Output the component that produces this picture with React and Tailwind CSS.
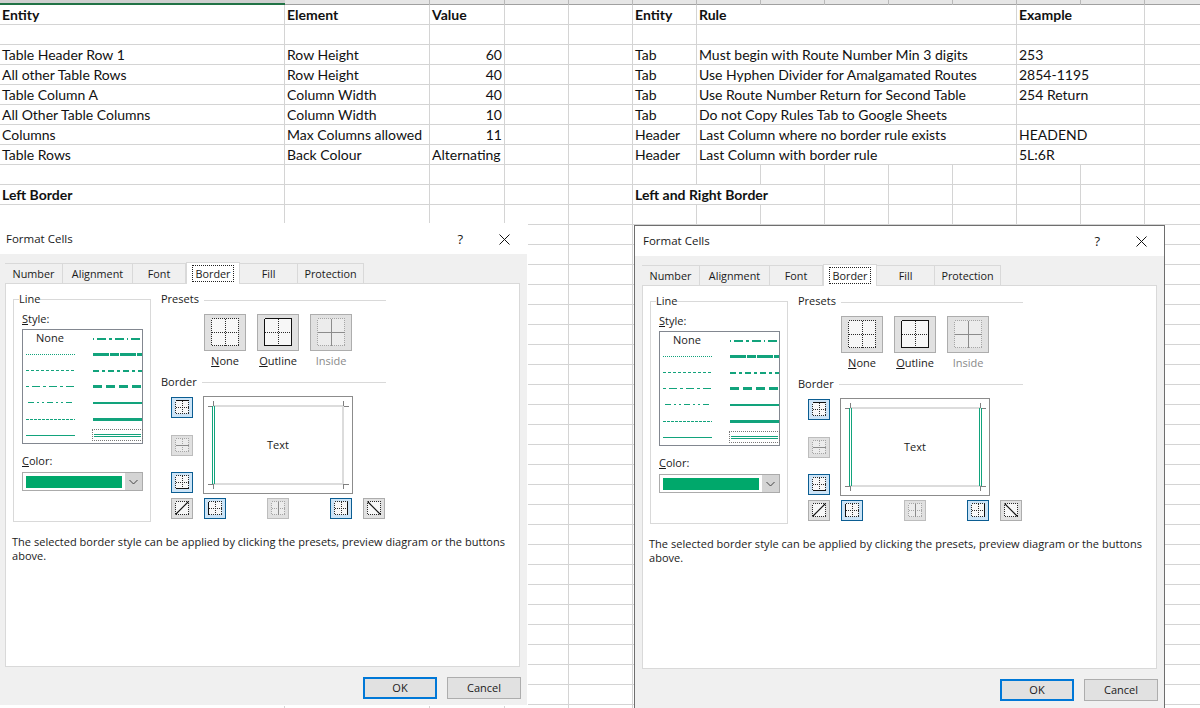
import React from 'react';

const GREEN = '#12a37c';

const leftRows = [
  ['Entity', 'Element', 'Value', 'Entity', 'Rule', 'Example'],
  ['', '', '', '', '', ''],
  ['Table Header Row 1', 'Row Height', '60', 'Tab', 'Must begin with Route Number Min 3 digits', '253'],
  ['All other Table Rows', 'Row Height', '40', 'Tab', 'Use Hyphen Divider for Amalgamated Routes', '2854-1195'],
  ['Table Column A', 'Column Width', '40', 'Tab', 'Use Route Number Return for Second Table', '254 Return'],
  ['All Other Table Columns', 'Column Width', '10', 'Tab', 'Do not Copy Rules Tab to Google Sheets', ''],
  ['Columns', 'Max Columns allowed', '11', 'Header', 'Last Column where no border rule exists', 'HEADEND'],
  ['Table Rows', 'Back Colour', 'Alternating', 'Header', 'Last Column with border rule', '5L:6R'],
];

const cell = 'h-5 border-r border-b border-[#d4d4d4] px-[2px] text-[14px] leading-[20px] whitespace-nowrap overflow-hidden';

const Sheet = () => (
  <div className="w-[1200px] font-['Lato',sans-serif] text-[#111]">
    <div className="grid grid-cols-[285px_145px_75px_64px_64px_64px_64px_64px_64px_64px_64px_64px_64px_64px_55px] h-[5px] bg-[#e6e6e6] border-b border-[#a0a0a0]">
      <div className="h-[5px] bg-[#cfcfcf] border-b-2 border-[#217346]"></div>
      {Array.from({ length: 14 }).map((_, i) => (
        <div key={i} className="border-r border-[#b8b8b8]"></div>
      ))}
    </div>
    <div className="grid grid-cols-[285px_145px_75px_64px_64px_64px_64px_64px_64px_64px_64px_64px_64px_64px_55px]">
      {leftRows.map((r, i) => (
        <React.Fragment key={i}>
          <div className={`${cell} ${i === 0 ? 'font-bold' : ''}`}>{r[0]}</div>
          <div className={`${cell} ${i === 0 ? 'font-bold' : ''}`}>{r[1]}</div>
          <div className={`${cell} ${i === 0 ? 'font-bold' : r[2] === 'Alternating' ? '' : 'text-right'}`}>{r[2]}</div>
          <div className={cell}></div>
          <div className={cell}></div>
          <div className={`${cell} ${i === 0 ? 'font-bold' : ''}`}>{r[3]}</div>
          <div className={`${cell} col-span-5 ${i === 0 ? 'font-bold' : ''}`}>{r[4]}</div>
          <div className={`${cell} col-span-2 ${i === 0 ? 'font-bold' : ''}`}>{r[5]}</div>
          <div className={cell}></div>
          <div className="h-5 border-b border-[#d4d4d4]"></div>
        </React.Fragment>
      ))}
      {Array.from({ length: 28 }).map((_, i) => {
        // "Left and Right Border" runs over into the next cells, as in a sheet
        const wide = i === 1;
        const cols = wide ? 13 : 15;
        return (
          <React.Fragment key={i}>
            {Array.from({ length: cols }).map((_, c) => {
              let text = '';
              if (wide && c === 0) text = 'Left Border';
              if (wide && c === 5) text = 'Left and Right Border';
              const last = c === cols - 1;
              return (
                <div
                  key={c}
                  className={`${last ? 'h-5 border-b border-[#d4d4d4]' : cell} ${text ? 'font-bold' : ''} ${wide && c === 5 ? 'col-span-3' : ''}`}
                >
                  {text}
                </div>
              );
            })}
          </React.Fragment>
        );
      })}
    </div>
  </div>
);

// dotted frame with a cross, plus the solid strokes the button stands for
const FrameIcon = ({ w, h, x0, y0, x1, y1, solid = [], grey = false }) => {
  const mx = Math.floor((x0 + x1) / 2) + 0.5;
  const my = Math.floor((y0 + y1) / 2) + 0.5;
  const ink = grey ? '#8c8c8c' : '#111';
  const dots = grey ? '#a6a6a6' : '#2a2a2a';
  const lines = {
    top: [x0, y0, x1, y0],
    bottom: [x0, y1, x1, y1],
    left: [x0, y0, x0, y1],
    right: [x1, y0, x1, y1],
    middle: [x0, my, x1, my],
    center: [mx, y0, mx, y1],
    up: [x0, y1, x1, y0],
    down: [x0, y0, x1, y1],
  };
  const diagonal = solid.includes('up') || solid.includes('down');
  return (
    <svg width={w} height={h} className="block">
      <rect x={x0} y={y0} width={x1 - x0} height={y1 - y0} fill={grey ? '#ececec' : '#f7f7f7'} />
      <g stroke={dots} strokeDasharray="1 1" fill="none" shapeRendering="crispEdges">
        <rect x={x0} y={y0} width={x1 - x0} height={y1 - y0} />
        {!diagonal && <line x1={mx} y1={y0} x2={mx} y2={y1} />}
        {!diagonal && <line x1={x0} y1={my} x2={x1} y2={my} />}
      </g>
      {solid.map(s => {
        const l = lines[s];
        const diag = s === 'up' || s === 'down';
        return (
          <line
            key={s}
            x1={l[0]}
            y1={l[1]}
            x2={l[2]}
            y2={l[3]}
            stroke={ink}
            strokeWidth={diag ? 1.1 : 1}
            shapeRendering={diag ? 'auto' : 'crispEdges'}
          />
        );
      })}
    </svg>
  );
};

const SideButton = ({ solid, state = 'off' }) => {
  const tone =
    state === 'on'
      ? 'border-[#0b5d92] bg-[#cce4f7]'
      : state === 'disabled'
      ? 'border-[#bdbdbd] bg-[#e0e0e0]'
      : 'border-[#adadad] bg-[#e1e1e1]';
  return (
    <div className={`box-border w-[22px] h-[21px] border ${tone}`}>
      <FrameIcon w={20} h={19} x0={3.5} y0={2.5} x1={16.5} y1={15.5} solid={[solid]} grey={state === 'disabled'} />
    </div>
  );
};

const PresetButton = ({ solid = [], grey }) => (
  <div className="box-border w-[42px] h-[37px] border border-[#adadad] bg-[#e1e1e1]">
    <FrameIcon w={40} h={35} x0={6.5} y0={3.5} x1={33.5} y1={30.5} solid={solid} grey={grey} />
  </div>
);

const LineSample = ({ dash, width = 1, x = 0 }) => (
  <svg width="50" height="5" className="block">
    <line
      x1={x}
      y1="2.5"
      x2="49"
      y2="2.5"
      stroke={GREEN}
      strokeWidth={width}
      strokeDasharray={dash}
      shapeRendering="crispEdges"
    />
  </svg>
);

const lineStyles = [
  [null, { dash: '1 3 9 3 3 3 9 3', width: 2 }],
  [{ dash: '1 1' }, { dash: '16 1 9 1', width: 3 }],
  [{ dash: '3 2' }, { dash: '6 3 3 3', width: 2 }],
  [{ dash: '3 3 8 3' }, { dash: '9 4', width: 3 }],
  [{ dash: '6 3 2 3 2 3', x: 2 }, { width: 2 }],
  [{ dash: '3 1' }, { width: 3 }],
  [{}, null],
];

const LineList = () => (
  <div className="box-border w-[121px] h-[115px] border border-[#828790] bg-white">
    {lineStyles.map((row, i) => (
      <div key={i} className="grid grid-cols-[67px_1fr] h-[16.2px] items-center pl-[3px]">
        {row[0] ? <LineSample {...row[0]} /> : <span className="pl-[10px]">None</span>}
        {row[1] ? (
          <LineSample {...row[1]} />
        ) : (
          <div className="box-border w-[51px] h-[12px] -ml-[1px] border border-dotted border-[#777] flex flex-col justify-center gap-[1px] px-[1px]">
            <div className="h-px bg-[#12a37c]"></div>
            <div className="h-px bg-[#12a37c]"></div>
          </div>
        )}
      </div>
    ))}
  </div>
);

const GroupHeading = ({ children, lift = '-mt-[2px]' }) => (
  <div className="flex items-center gap-[5px] h-[14px] w-[225px]">
    <span className={`leading-[12px] ${lift}`}>{children}</span>
    <div className="flex-1 h-px bg-[#d9d9d9]"></div>
  </div>
);

const Preview = ({ both }) => (
  <div className="relative box-border w-[150px] h-[98px] border border-[#8c8c8c] bg-white flex items-center justify-center">
    <svg width="148" height="96" className="absolute left-0 top-0">
      <g fill="#dcdcdc">
        <rect x="9" y="8" width="131" height="2" />
        <rect x="9" y="86" width="131" height="2" />
        {!both && <rect x="138" y="8" width="2" height="80" />}
      </g>
      <g stroke="#808080" shapeRendering="crispEdges">
        <line x1="4" y1="9" x2="9" y2="9" />
        <line x1="9" y1="4" x2="9" y2="9" />
        <line x1="140" y1="9" x2="145" y2="9" />
        <line x1="139.5" y1="4" x2="139.5" y2="9" />
        <line x1="4" y1="87" x2="9" y2="87" />
        <line x1="9" y1="87" x2="9" y2="92" />
        <line x1="140" y1="87" x2="145" y2="87" />
        <line x1="139.5" y1="87" x2="139.5" y2="92" />
      </g>
      <g stroke={GREEN} shapeRendering="crispEdges">
        <line x1="8.5" y1="9" x2="8.5" y2="87" />
        <line x1="10.5" y1="9" x2="10.5" y2="87" />
        {both && <line x1="138.5" y1="9" x2="138.5" y2="87" />}
        {both && <line x1="140.5" y1="9" x2="140.5" y2="87" />}
      </g>
    </svg>
    <span className="relative">Text</span>
  </div>
);

const tabs = [
  ['Number', 'w-[58px]'],
  ['Alignment', 'w-[70px]'],
  ['Font', 'w-[53px]'],
  ['Border', 'w-[54px]'],
  ['Fill', 'w-[58px]'],
  ['Protection', 'w-[66px]'],
];

const Dialog = ({ className, both }) => (
  <div
    className={`absolute box-border flex flex-col w-[531px] border bg-white font-['Open_Sans',sans-serif] text-[11px] leading-[14px] text-[#1a1a1a] ${className}`}
  >
    <div className="flex items-center h-[30px] pl-[8px] bg-white">
      <span className="flex-1 text-[11.5px]">Format Cells</span>
      <span className="text-[13px]">?</span>
      <svg width="11" height="11" className="ml-[36px] mr-[17px]">
        <path d="M0.5 0.5 L10.5 10.5 M10.5 0.5 L0.5 10.5" stroke="#111" fill="none" />
      </svg>
    </div>
    <div className="flex-1 bg-[#f0f0f0] pt-[9px]">
      <div className="flex items-end h-[20px] pl-[7px] text-[10.8px]">
        {tabs.map(([name, width]) =>
          name === 'Border' ? (
            <div
              key={name}
              className={`${width} box-border h-[22px] -mb-px relative z-10 bg-white border border-b-0 border-[#d9d9d9] flex items-center justify-center`}
            >
              <span className="border border-dotted border-[#222] px-[3px] leading-[15px]">{name}</span>
            </div>
          ) : (
            <div
              key={name}
              className={`${width} box-border h-[20px] border border-l-0 border-b-0 border-[#d9d9d9] flex items-center justify-center`}
            >
              {name}
            </div>
          )
        )}
      </div>
      <div className="box-border ml-[7px] w-[515px] h-[384px] bg-white border border-[#d9d9d9]">
        <div className="flex pl-[7px] pt-[15px]">
          <div className="relative box-border w-[138px] h-[223px] border border-[#d9d9d9] pl-[8px] pt-[13px]">
            <span className="absolute -top-[8px] left-[5px] bg-white">Line</span>
            <div className="h-[14px] leading-[12px]"><u>S</u>tyle:</div>
            <div className="mt-[2px]"><LineList /></div>
            <div className="mt-[11px] h-[14px] leading-[12px]"><u>C</u>olor:</div>
            <div className="mt-[3px] box-border w-[121px] h-[19px] border border-[#ababab] flex items-center pl-[3px]">
              <div className="w-[96px] h-[12px] bg-[#00a86b]"></div>
              <div className="ml-auto w-[17px] h-[17px] bg-[#d4d4d4] flex items-center justify-center">
                <svg width="9" height="6">
                  <path d="M0.5 1 L4.5 5 L8.5 1" stroke="#444" fill="none" />
                </svg>
              </div>
            </div>
          </div>
          <div className="ml-[10px] -mt-[6px]">
            <GroupHeading>Presets</GroupHeading>
            <div className="flex gap-[11px] pl-[43px] mt-[7px]">
              <PresetButton />
              <PresetButton solid={['top', 'bottom', 'left', 'right']} />
              <PresetButton solid={['middle', 'center']} grey />
            </div>
            <div className="flex gap-[11px] pl-[43px] mt-[4px] h-[14px] leading-[12px]">
              <div className="w-[42px] text-center"><u>N</u>one</div>
              <div className="w-[42px] text-center whitespace-nowrap"><u>O</u>utline</div>
              <div className="w-[42px] text-center text-[#8a8a8a]">Inside</div>
            </div>
            <div className="mt-[6px]"><GroupHeading lift="mt-0">Border</GroupHeading></div>
            <div className="mt-[7px] ml-[10px]">
              <div className="flex">
                <div className="flex flex-col gap-[16.5px] pt-[1px]">
                  <SideButton solid="top" state="on" />
                  <SideButton solid="middle" state="disabled" />
                  <SideButton solid="bottom" state="on" />
                </div>
                <div className="ml-[10px]"><Preview both={both} /></div>
              </div>
              <div className="flex mt-[4px]">
                <SideButton solid="up" />
                <div className="ml-[11px]"><SideButton solid="left" state="on" /></div>
                <div className="ml-[41px]"><SideButton solid="center" state="disabled" /></div>
                <div className="ml-[41px]"><SideButton solid="right" state="on" /></div>
                <div className="ml-[11px]"><SideButton solid="down" /></div>
              </div>
            </div>
          </div>
        </div>
        <p className="ml-[6px] mt-[13px] w-[505px] tracking-[0.03px]">
          The selected border style can be applied by clicking the presets, preview diagram or the buttons above.
        </p>
      </div>
      <div className="flex justify-end gap-[10px] pr-[6px] mt-[10px]">
        <div className="box-border w-[74px] h-[22px] border-2 border-[#0078d7] bg-[#e1e1e1] flex items-center justify-center pb-px">OK</div>
        <div className="box-border w-[74px] h-[22px] border border-[#adadad] bg-[#e1e1e1] flex items-center justify-center pb-px">Cancel</div>
      </div>
    </div>
  </div>
);

export default function App() {
  return (
    <div className="relative w-[1200px] h-[708px] overflow-hidden bg-white">
      <Sheet />
      <Dialog className="left-[-3px] top-[223px] h-[483px] border-transparent" />
      <Dialog className="left-[634px] top-[225px] h-[490px] border-[#6e6e6e]" both />
    </div>
  );
}
